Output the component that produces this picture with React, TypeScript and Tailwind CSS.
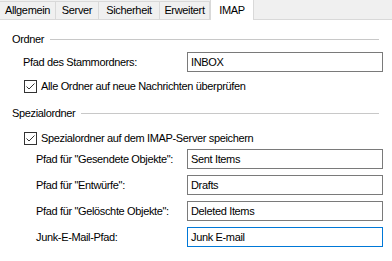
const tabs = [
  { label: "Allgemein", w: "w-[56px]" },
  { label: "Server", w: "w-[43px]" },
  { label: "Sicherheit", w: "w-[61px]" },
  { label: "Erweitert", w: "w-[50px]" },
];

const CheckMark = () => (
  <svg width="13" height="13" viewBox="0 0 13 13" className="shrink-0">
    <rect x="0.5" y="0.5" width="12" height="12" fill="#fff" stroke="#333" />
    <path d="M2.5 6.5 L5 9 L10.5 3.5" fill="none" stroke="#333" strokeWidth="1" />
  </svg>
);

const GroupHeader = ({ title, className }: { title: string; className?: string }) => (
  <div className={`flex items-center h-[14px] pl-[12px] pr-[13px] ${className ?? ""}`}>
    <span>{title}</span>
    <div className="flex-1 h-px bg-[#c8c8c8] ml-[6px]" />
  </div>
);

const Field = ({
  label,
  value,
  indent,
  focused,
  className,
}: {
  label: string;
  value: string;
  indent: string;
  focused?: boolean;
  className?: string;
}) => (
  <div className={`flex items-center h-[20px] pr-[9px] ${indent} ${className ?? ""}`}>
    <span className="flex-1">{label}</span>
    <div
      className={`w-[196px] h-[20px] flex items-center pl-[3px] border ${
        focused ? "border-[#0078d7]" : "border-[#7a7a7a]"
      } bg-white`}
    >
      {value}
    </div>
  </div>
);

const CheckRow = ({ label, className }: { label: string; className?: string }) => (
  <div className={`flex items-center gap-[4px] h-[14px] pl-[24px] ${className ?? ""}`}>
    <CheckMark />
    <span>{label}</span>
  </div>
);

export default function App() {
  return (
    <div
      className="w-[392px] h-[261px] bg-white overflow-hidden text-[11px] leading-none tracking-[-0.35px] text-black"
      style={{ fontFamily: '"Liberation Sans", Arial, sans-serif' }}
    >
      <div className="flex items-end h-[20px] bg-[#f0f0f0] border-b border-[#d9d9d9]">
        {tabs.map((t) => (
          <div
            key={t.label}
            className={`${t.w} h-[18px] flex items-center justify-center border-t border-r border-[#d9d9d9] bg-[#f0f0f0]`}
          >
            {t.label}
          </div>
        ))}
        <div className="w-[44px] h-[21px] -mb-px flex items-center justify-center bg-white border-x border-t border-[#d9d9d9]">
          IMAP
        </div>
      </div>

      <GroupHeader title="Ordner" className="mt-[12px]" />
      <Field label="Pfad des Stammordners:" value="INBOX" indent="pl-[23px]" className="mt-[6px]" />
      <CheckRow label="Alle Ordner auf neue Nachrichten überprüfen" className="mt-[7px]" />

      <GroupHeader title="Spezialordner" className="mt-[13px]" />
      <CheckRow label="Spezialordner auf dem IMAP-Server speichern" className="mt-[11px]" />
      <Field label={'Pfad für "Gesendete Objekte":'} value="Sent Items" indent="pl-[36px]" className="mt-[4px]" />
      <Field label={'Pfad für "Entwürfe":'} value="Drafts" indent="pl-[36px]" className="mt-[6px]" />
      <Field label={'Pfad für "Gelöschte Objekte":'} value="Deleted Items" indent="pl-[36px]" className="mt-[6px]" />
      <Field label="Junk-E-Mail-Pfad:" value="Junk E-mail" indent="pl-[36px]" focused className="mt-[6px]" />
    </div>
  );
}
